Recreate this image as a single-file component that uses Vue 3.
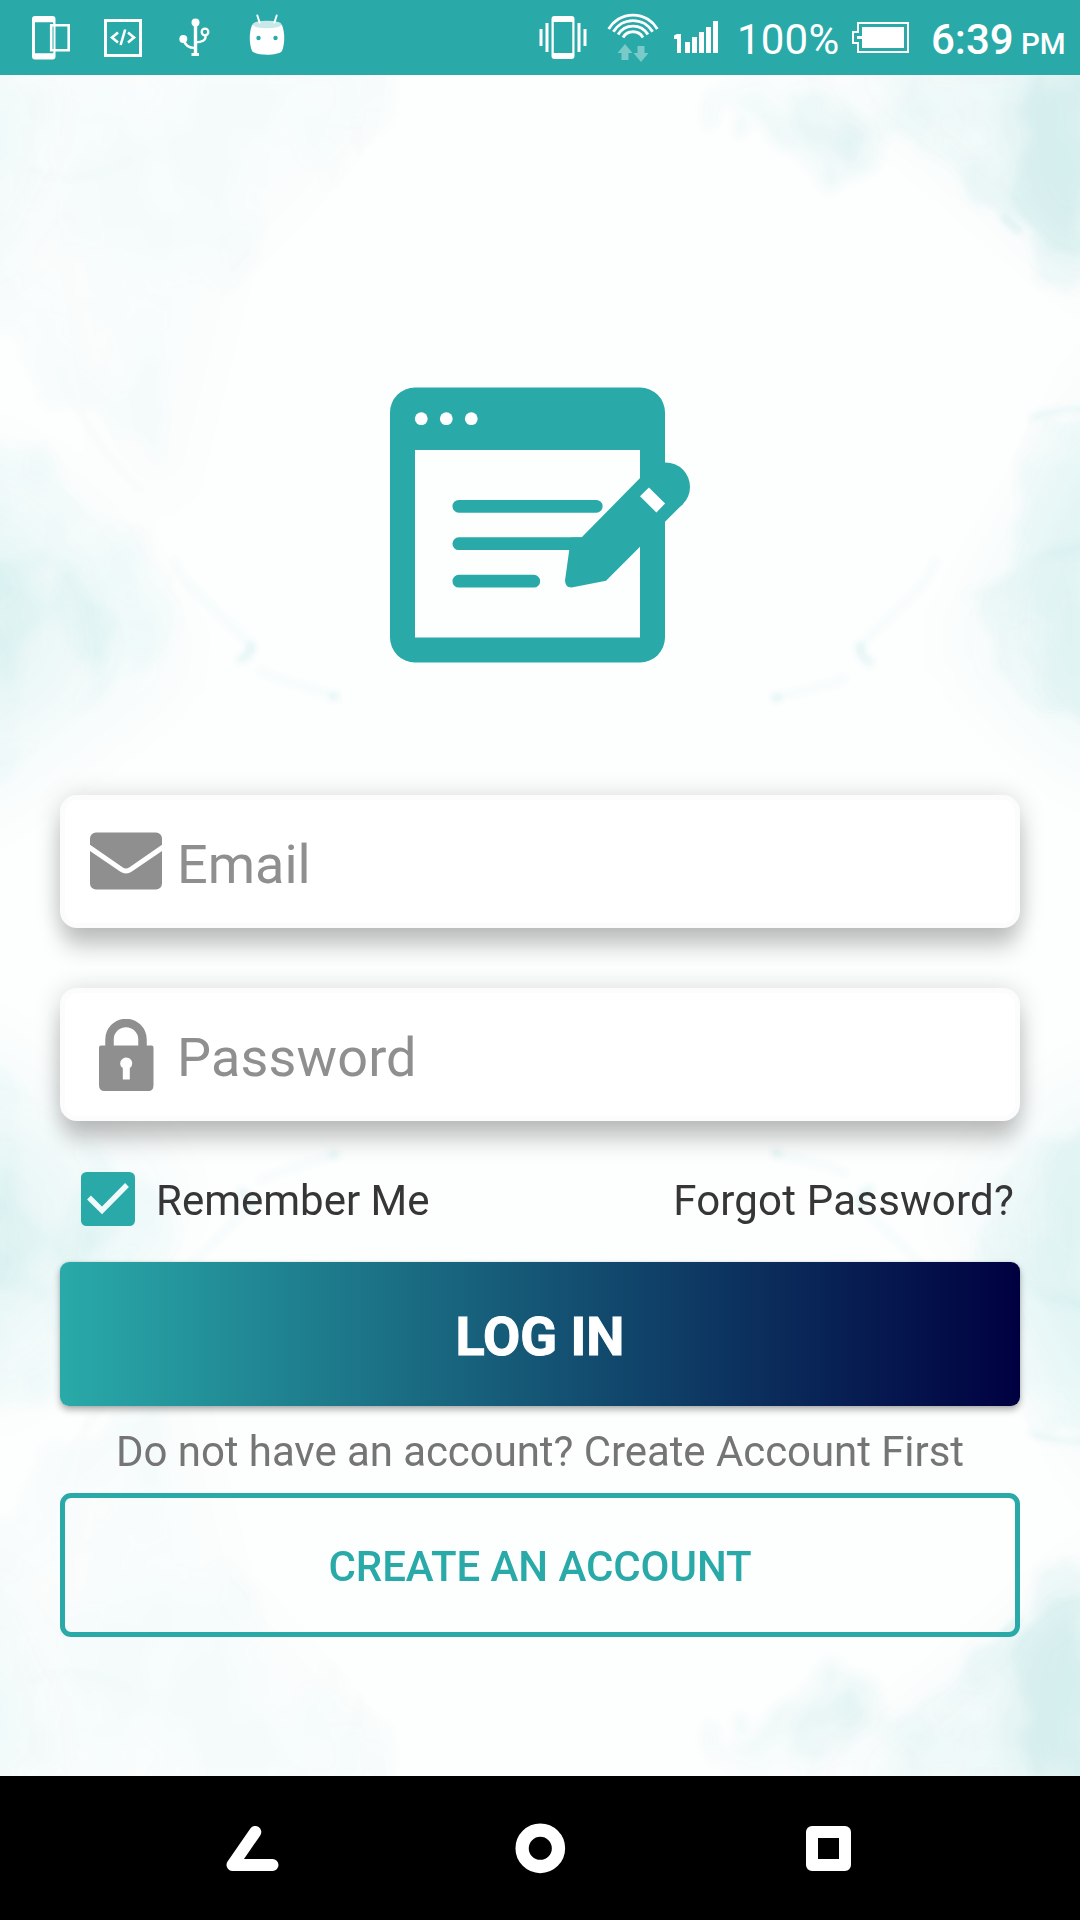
<script setup>
const wifiArcs = [28.3, 22.8, 17.3, 11.6].map((r) => {
  const dx = r * 0.86
  const dy = r * 0.51
  return `M${633.5 - dx} ${43.4 - dy}A${r} ${r} 0 0 1 ${633.5 + dx} ${43.4 - dy}`
})
const signalBars = [
  { x: 685, y: 42 },
  { x: 692, y: 37 },
  { x: 699, y: 32 },
  { x: 706, y: 27 },
  { x: 713, y: 21 },
]
</script>

<template>
  <div class="screen">
    <header class="status">
      <svg class="ic phone" width="42" height="75" viewBox="30 0 42 75">
        <path fill="#fff" fill-rule="evenodd" d="M35 16h17.500a3 3 0 0 1 3 3v37.500a3 3 0 0 1-3 3H35a3 3 0 0 1-3-3V19a3 3 0 0 1 3-3zM35 22.300v31h18v-31z" />
        <path fill="#29aaa9" d="M48.500 23.500h5v29h-5z" />
        <path fill="none" stroke="#fff" stroke-width="2.600" d="M51.200 25.300h17.500v25H51.200z" />
      </svg>
      <svg class="ic code" width="38" height="75" viewBox="104 0 38 75" fill="none" stroke="#fff">
        <path stroke-width="3" d="M105.500 20.500h35v35h-35z" />
        <path stroke-width="2.600" d="M118 32.500l-6 5 6 5M125.200 29.500l-4.600 15.500M128 32.500l6 5-6 5" />
      </svg>
      <svg class="ic usb" width="34" height="75" viewBox="178 0 34 75" fill="none" stroke="#fff" stroke-width="2.300">
        <path stroke-width="3.400" d="M195.500 22v32" />
        <path d="M183.500 39c1 6 6 9 12 9.200M205.500 35.500c1 5-4 6.500-10 6.800" />
        <circle cx="205" cy="32" r="3.300" />
        <g fill="#fff" stroke="none">
          <circle cx="195.500" cy="22.500" r="4" />
          <circle cx="183.300" cy="39" r="4" />
          <path d="M191.500 53h7.500v3h-7.500z" />
        </g>
      </svg>
      <svg class="ic usb" width="38" height="75" viewBox="248 0 38 75">
        <path fill="#fff" d="M252 25c7-4 23-4 30 0 3 8 3 18 0 26-4 5-26 5-30 0-3-8-3-18 0-26z" />
        <ellipse cx="267" cy="24.500" rx="14.500" ry="3.800" fill="#c8e9e8" />
        <path stroke="#fff" stroke-width="2" stroke-linecap="round" d="M257.300 15.500l2.300 7M276.700 15.500l-2.300 7" />
        <circle cx="258.500" cy="38" r="2.200" fill="#29aaa9" />
        <circle cx="275.500" cy="38" r="2.200" fill="#29aaa9" />
      </svg>

      <svg class="ic push" width="48" height="75" viewBox="538.500 0 48 75" fill="#fff">
        <path fill-rule="evenodd" d="M554 16h17a3 3 0 0 1 3 3v37a3 3 0 0 1-3 3h-17a3 3 0 0 1-3-3V19a3 3 0 0 1 3-3zM553.300 22v31h18.500V22z" />
        <path d="M539 29h3v17h-3zM545 23h3v29h-3zM577 23h3v29h-3zM583 29h3v17h-3z" />
      </svg>
      <svg class="ic wifi" width="52" height="75" viewBox="607.500 0 52 75">
        <path v-for="d in wifiArcs" :key="d" :d="d" fill="none" stroke="#fff" stroke-width="2.900" />
        <path fill="#79cac9" d="M625.500 44l7.500 9h-4v7h-7v-7h-4zM638 46h7v7h4l-7.500 9-7.500-9h4z" />
      </svg>
      <svg class="ic signal" width="44" height="75" viewBox="674 0 44 75" fill="#fff">
        <path d="M677 34h4v19h-4V39h-3v-3.500z" />
        <rect v-for="b in signalBars" :key="b.x" :x="b.x" :y="b.y" width="5" :height="53 - b.y" />
      </svg>
      <span class="pct">100%</span>
      <svg class="ic bat" width="58" height="75" viewBox="852 0 58 75">
        <path fill="none" stroke="#fff" stroke-width="2" d="M858 23h50v29h-50v-9h-5V32h5z" />
        <path fill="#fff" d="M862 27h42v21h-42v-9h-5v-3h5z" />
      </svg>
      <span class="time">6:39</span><span class="pm">PM</span>
    </header>

    <main class="body">
      <svg class="ink" width="1080" height="1701" viewBox="0 75 1080 1701">
        <defs>
          <filter id="wash" x="-20%" y="-20%" width="140%" height="140%">
            <feTurbulence type="fractalNoise" baseFrequency=".011 .008" numOctaves="5" seed="8" result="n" />
            <feDisplacementMap in="SourceGraphic" in2="n" scale="90" xChannelSelector="R" yChannelSelector="G" result="d" />
            <feColorMatrix in="n" type="matrix" values="0 0 0 0 0  0 0 0 0 0  0 0 0 0 0  0 0 3 0 -.8" result="grain" />
            <feComposite in="d" in2="grain" operator="in" />
            <feGaussianBlur stdDeviation="5" />
          </filter>
          <filter id="soft" x="-30%" y="-30%" width="160%" height="160%"><feGaussianBlur stdDeviation="26" /></filter>
          <filter id="fine" x="-30%" y="-30%" width="160%" height="160%"><feGaussianBlur stdDeviation="3" /></filter>
          <clipPath id="half"><path d="M0 75h1080v850.500H0z" /></clipPath>
          <g id="plume" clip-path="url(#half)">
            <g filter="url(#soft)" fill="#29a59f">
              <path opacity=".04" d="M-30 60h85l-5 100-50 110h-40z" />
              <path opacity=".01" d="M60 60h310l-20 80-120 130-60 250-60-80-30-200z" />
              <path opacity=".04" d="M820 60h290v240l-60-50-90-80z" />
              <path opacity=".04" d="M1040 60h60v180l-50-20z" />
              <path opacity=".05" d="M-40 470l60 60 60 60 10 70-50 60-90 30z" />
              <path opacity=".045" d="M1120 410l-50 60-50 120 0 60 50 80 70 20z" />
              <path opacity=".025" d="M-30 430l110 60 100 140-10 60-110 80-100 70z" />
              <path opacity=".025" d="M1110 330l-70 150-80 130 0 60 80 80 70 50z" />
            </g>
            <g filter="url(#wash)" fill="#29a59f">
              <path opacity=".05" d="M690 30l15 80 45 25 35 30 30 20 50-20 25-30 50 25 50 60 70 35h60V30z" />
              <path opacity=".05" d="M785 100l80-30 30 20-35 50-35 35-30-30z" />
              <path opacity=".05" d="M1030 40h90v230l-70 40-30-100 10-80z" />
              <path opacity=".035" d="M-60 440l100 20 50 60 70 40 15 60-50 50-80 90-105 20z" />
              <path opacity=".06" d="M-60 540l120 25 50 50-20 60-150 60z" />
              <path opacity=".05" d="M1150 530l-130 20-60 40 30 60 60 60 100 30z" />
              <path opacity=".045" d="M1150 405l-110 15-10 70-20 60 140 0z" />
              <path opacity=".018" d="M-60 30h420l30 90-70 90-120 60-50 200-90-70-120-120z" />
            </g>
            <g filter="url(#fine)" fill="none" stroke="#29aaa9" stroke-linecap="round">
              <path stroke-width="4" opacity=".05" d="M174 560c14 36 76 75 77 90M936 560c-10 36-75 75-75 90M260 670c20 12 55 18 74 26M845 678c-15 10-50 12-70 20" />
              <path stroke-width="6" opacity=".13" d="M251 645q1 10-10 14M860 645q-2 10 10 17M333 696l2 1M775 698l3-1M1004 218l14 13" />
              <path stroke-width="5" opacity=".08" d="M1032 418q15-8 60-10" />
              <path stroke-width="4" opacity=".02" d="M30 170q50 20 100-10M355 120l5 35M60 370q20 60 80 120" />
            </g>
          </g>
        </defs>
        <use href="#plume" />
        <use href="#plume" transform="translate(0 1851) scale(1 -1)" />
      </svg>

      <svg class="logo" width="301" height="276" viewBox="390 387 301 276">
        <path fill="#29aaa9" fill-rule="evenodd" d="M415 387.500h225a25 25 0 0 1 25 25v225a25 25 0 0 1-25 25H415a25 25 0 0 1-25-25v-225a25 25 0 0 1 25-25zM415 450v187.500h225V450z" />
        <g fill="#fff">
          <circle cx="421.300" cy="418.700" r="6.400" />
          <circle cx="446.300" cy="418.700" r="6.400" />
          <circle cx="471.300" cy="418.700" r="6.400" />
        </g>
        <path stroke="#29aaa9" stroke-width="12.700" stroke-linecap="round" d="M458.800 506.300h137.500M458.800 543.700h130M458.800 581.200h75" />
        <path fill="#29aaa9" d="M581.500 537.500L648.200 469.700l34.600 34.400L606 580.700l-34.500 6.900q-6.500-.5-6.500-7l6-43z" />
        <circle cx="665.500" cy="486.900" r="24.500" fill="#29aaa9" />
        <path fill="#fff" d="M640 496.200l8.900-8.800 16.200 16.100-8.700 9z" />
      </svg>

      <div class="field">
        <svg class="fi" width="72" height="72" viewBox="0 0 72 72">
          <path fill="#8f8f8f" d="M6 6.500h60a6 6 0 0 1 6 6v45a6 6 0 0 1-6 6H6a6 6 0 0 1-6-6v-45a6 6 0 0 1 6-6z" />
          <path fill="none" stroke="#fff" stroke-width="5" d="M-2 20.500l33.500 23q4.500 3 9 0L74 20.500" />
        </svg>
        <span class="hint">Email</span>
      </div>
      <div class="field second">
        <svg class="fi" width="72" height="72" viewBox="0 1.500 72 72">
          <path fill="none" stroke="#8f8f8f" stroke-width="8.500" d="M19.500 30v-8a16.500 16.500 0 0 1 33 0V30" />
          <path fill="#8f8f8f" fill-rule="evenodd" d="M11 28h50.500a2 2 0 0 1 2 2v37.500q0 6-5 6h-44q-5.500 0-5.500-6V30a2 2 0 0 1 2-2zM36 40a6 6 0 0 0-5 9l1.800 1.500V62h7V50.500L41.500 49A6 6 0 0 0 36 40z" />
        </svg>
        <span class="hint password">Password</span>
      </div>

      <div class="options">
        <svg width="54" height="54" viewBox="0 0 54 54">
          <rect width="54" height="54" rx="5.500" fill="#29aaa9" />
          <path fill="none" stroke="#f0fafa" stroke-width="5.400" d="M8 25.500l13 13L46 13" />
        </svg>
        <span class="remember">Remember Me</span>
        <a class="forgot">Forgot Password?</a>
      </div>

      <button class="login">LOG IN</button>
      <p class="note">Do not have an account? Create Account First</p>
      <button class="create">CREATE AN ACCOUNT</button>
    </main>

    <nav class="nav">
      <svg width="1080" height="144" viewBox="0 1776 1080 144" fill="none" stroke="#fff">
        <path stroke-width="12" stroke-linecap="round" stroke-linejoin="round" d="M255.300 1832L232.500 1865h40" />
        <circle cx="540.300" cy="1848.300" r="18.200" stroke-width="13.300" />
        <rect x="812" y="1832" width="33" height="33" stroke-width="12" stroke-linejoin="round" />
      </svg>
    </nav>
  </div>
</template>

<style>
body {
  margin: 0;
}
</style>

<style scoped>
.screen {
  width: 1080px;
  height: 1920px;
  display: flex;
  flex-direction: column;
  overflow: hidden;
  font-family: Roboto, "Liberation Sans", sans-serif;
  background: #fff;
}
.status {
  height: 75px;
  flex: none;
  display: flex;
  background: #29aaa9;
  color: #fff;
  line-height: 80px;
  font-size: 42px;
  white-space: nowrap;
}
.ic {
  flex: none;
}
.phone {
  margin-left: 30px;
}
.code {
  margin-left: 32px;
}
.usb {
  margin-left: 36px;
}
.push {
  margin-left: auto;
}
.wifi {
  margin-left: 20.5px;
}
.signal {
  margin-left: 15px;
}
.pct {
  width: 102px;
  margin-left: 19px;
  letter-spacing: 0.2px;
}
.bat {
  margin-left: 13px;
}
.time {
  width: 82px;
  margin-left: 21px;
  font-weight: 500;
}
.pm {
  width: 46px;
  margin: 4px 13px 0 8px;
  font-size: 29.5px;
  font-weight: 500;
}
.body {
  position: relative;
  height: 1701px;
  flex: none;
  box-sizing: border-box;
  padding: 312px 60px 0;
  display: flex;
  flex-direction: column;
  background: #fdfefe;
  overflow: hidden;
}
.ink {
  position: absolute;
  left: 0;
  top: 0;
}
.body > :not(.ink) {
  position: relative;
}
.logo {
  margin-left: 330px;
  flex: none;
}
.field {
  height: 133px;
  margin-top: 132px;
  box-sizing: border-box;
  display: flex;
  align-items: center;
  padding-left: 25px;
  border: 5px solid #fcfcfc;
  border-radius: 17px;
  background: #fff;
  box-shadow: 0 22px 22px -2px rgba(0, 0, 0, 0.19), 0 2px 26px rgba(0, 0, 0, 0.17);
}
.second {
  margin-top: 60px;
}
.hint {
  margin: 6px 0 0 15px;
  font-size: 54px;
  line-height: 64px;
  color: #8f8f8f;
}
.password {
  letter-spacing: 0.15px;
}
.options {
  height: 54px;
  margin-top: 51px;
  padding: 0 6px 0 21px;
  display: flex;
  font-size: 42px;
  line-height: 58px;
  color: #363636;
}
.remember {
  margin-left: 21px;
}
.forgot {
  margin-left: auto;
  letter-spacing: 0.2px;
}
button {
  font-family: inherit;
  margin: 0;
  height: 144px;
  flex: none;
}
.login {
  margin-top: 36px;
  padding: 4px 0 0;
  border: 0;
  border-radius: 9px;
  color: #fff;
  font-size: 54px;
  font-weight: 700;
  -webkit-text-stroke: 1px #fff;
  background: linear-gradient(90deg, #29aaa9, #000040);
  box-shadow: 0 4px 7px rgba(0, 0, 0, 0.3), 0 0 3px rgba(0, 0, 0, 0.12);
}
.note {
  height: 87px;
  margin: 0;
  text-align: center;
  font-size: 42px;
  line-height: 91px;
  letter-spacing: -0.07px;
  color: #757575;
}
.create {
  box-sizing: border-box;
  padding: 2px 0 0;
  border: 5px solid #29aaa9;
  border-radius: 11px;
  background: transparent;
  color: #29aaa9;
  font-size: 42px;
  font-weight: 500;
  letter-spacing: -0.07px;
}
.nav {
  height: 144px;
  flex: none;
  background: #000;
}
.nav svg {
  display: block;
}
</style>
